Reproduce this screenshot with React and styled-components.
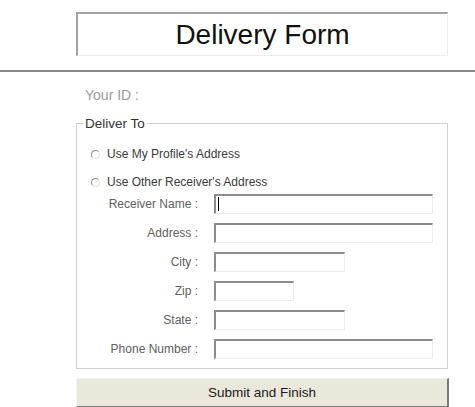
import React from 'react';
import styled, { createGlobalStyle } from 'styled-components';

const GlobalStyle = createGlobalStyle`
  body {
    margin: 0;
    background: #fff;
    font-family: 'Liberation Sans', Arial, sans-serif;
  }
`;

const Header = styled.div`
  padding: 12px 0 0 76px;
`;

const TitleBox = styled.div`
  box-sizing: border-box;
  width: 372px;
  height: 44px;
  border-style: solid;
  border-width: 2px 1px 1px 2px;
  border-color: #a2a2a2 #ececec #ececec #a2a2a2;
  display: flex;
  align-items: center;
  justify-content: center;
  font-size: 28px;
  color: #111;
`;

const Rule = styled.div`
  margin-top: 14px;
  border-top: 2px solid #888;
`;

const Main = styled.div`
  width: 373px;
  margin-left: 76px;
`;

const YourId = styled.div`
  margin: 15px 0 0 9px;
  font-size: 14px;
  line-height: 16px;
  color: #9a9a9a;
`;

const Group = styled.fieldset`
  box-sizing: border-box;
  width: 372px;
  margin: 13px 0 0;
  padding: 13px 0 9px;
  min-width: 0;
  border: 1px solid #cfcfcf;
`;

const Legend = styled.legend`
  margin-left: 6px;
  padding: 0 2px 0 2px;
  font-size: 13.5px;
  line-height: 15px;
  color: #333;
`;

const Choice = styled.label`
  display: flex;
  align-items: center;
  gap: 7px;
  height: 20px;
  margin: 0 0 8px 14px;
  font-size: 12px;
  color: #3a3a3a;
`;

const Radio = styled.span`
  box-sizing: border-box;
  width: 9px;
  height: 9px;
  border-radius: 50%;
  border: 1px solid;
  border-color: #8a8a8a #e4e4e4 #e4e4e4 #8a8a8a;
`;

const Fields = styled.div`
  display: grid;
  grid-template-columns: 121px 1fr;
  column-gap: 16px;
  row-gap: 9px;
  margin-top: -6px;
  align-items: center;
`;

const Label = styled.span`
  text-align: right;
  font-size: 12px;
  color: #606060;
`;

const Field = styled.span`
  position: relative;
  display: block;
  width: ${p => p.$w}px;
  height: 20px;

  &::after {
    content: '';
    display: ${p => (p.$focused ? 'block' : 'none')};
    position: absolute;
    left: 4px;
    top: 3px;
    width: 1px;
    height: 14px;
    background: #000;
  }
`;

const Input = styled.input`
  box-sizing: border-box;
  display: block;
  width: 100%;
  height: 20px;
  margin: 0;
  padding: 0 4px;
  border-style: solid;
  border-width: 2px 1px 1px 2px;
  border-color: #8c8c8c #ececec #ececec #8c8c8c;
  background: #fff;
  outline: none;
  font: 12px 'Liberation Sans', Arial, sans-serif;
`;

const SubmitButton = styled.button`
  box-sizing: border-box;
  display: block;
  width: 373px;
  height: 30px;
  margin-top: 9px;
  border-style: solid;
  border-width: 1px 2px 2px 1px;
  border-color: #f4f3ec #7a7a7a #7a7a7a #f4f3ec;
  background: #eae8da;
  font: 13.5px 'Liberation Sans', Arial, sans-serif;
  color: #1a1a1a;
  padding: 0;
`;

const fields = [
  { label: 'Receiver Name :', width: 219, focused: true },
  { label: 'Address :', width: 219 },
  { label: 'City :', width: 131 },
  { label: 'Zip :', width: 80 },
  { label: 'State :', width: 131 },
  { label: 'Phone Number :', width: 219 },
];

export default function App() {
  return (
    <>
      <GlobalStyle />
      <Header>
        <TitleBox>Delivery Form</TitleBox>
      </Header>
      <Rule />
      <Main>
        <YourId>Your ID :</YourId>
        <Group>
          <Legend>Deliver To</Legend>
          <Choice>
            <Radio />
            Use My Profile's Address
          </Choice>
          <Choice>
            <Radio />
            Use Other Receiver's Address
          </Choice>
          <Fields>
            {fields.map(f => (
              <React.Fragment key={f.label}>
                <Label>{f.label}</Label>
                <Field $w={f.width} $focused={f.focused}>
                  <Input type="text" />
                </Field>
              </React.Fragment>
            ))}
          </Fields>
        </Group>
        <SubmitButton>Submit and Finish</SubmitButton>
      </Main>
    </>
  );
}
